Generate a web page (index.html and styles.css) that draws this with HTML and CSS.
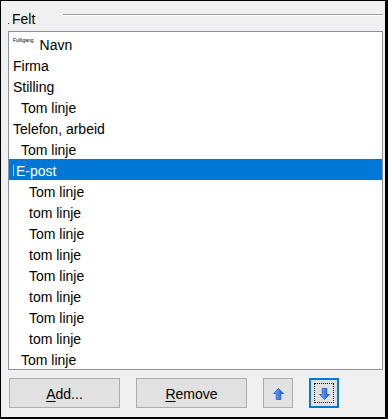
FILE: index.html
```html
<!DOCTYPE html>
<html lang="no">
<head>
    <meta charset="UTF-8">
    <title>Felt</title>
    <link rel="stylesheet" href="styles.css">
</head>
<body>
    <div class="window">
        <div class="group-head">
            <span class="dot"></span>
            <span class="caption">Felt</span>
            <span class="rule"></span>
        </div>

        <ul class="fields">
            <li class="lvl0"><span class="tag">Fulltgang</span>Navn</li>
            <li class="lvl0">Firma</li>
            <li class="lvl0">Stilling</li>
            <li class="lvl1">Tom linje</li>
            <li class="lvl0">Telefon, arbeid</li>
            <li class="lvl1">Tom linje</li>
            <li class="lvl0 selected"><span class="focus-mark"></span>E-post</li>
            <li class="lvl2">Tom linje</li>
            <li class="lvl2">tom linje</li>
            <li class="lvl2">Tom linje</li>
            <li class="lvl2">tom linje</li>
            <li class="lvl2">Tom linje</li>
            <li class="lvl2">tom linje</li>
            <li class="lvl2">Tom linje</li>
            <li class="lvl2">tom linje</li>
            <li class="lvl1">Tom linje</li>
        </ul>

        <div class="buttons">
            <button class="btn wide"><u>A</u>dd...</button>
            <button class="btn wide"><u>R</u>emove</button>
            <button class="btn square" title="Flytt opp">
                <svg width="11" height="12" viewBox="0 0 11 12">
                    <defs>
                        <linearGradient id="up-fill" x1="0" y1="0" x2="1" y2="0">
                            <stop offset="0" stop-color="#8fc0ff"/>
                            <stop offset="0.5" stop-color="#3f86ee"/>
                            <stop offset="1" stop-color="#1b4fc2"/>
                        </linearGradient>
                    </defs>
                    <path d="M5.5 0.5 L10.5 5.5 L7.8 5.5 L7.8 11.5 L3.2 11.5 L3.2 5.5 L0.5 5.5 Z" fill="url(#up-fill)" stroke="#2a56b8" stroke-width="0.8"/>
                </svg>
            </button>
            <button class="btn square focused" title="Flytt ned">
                <svg width="11" height="12" viewBox="0 0 11 12">
                    <defs>
                        <linearGradient id="down-fill" x1="0" y1="0" x2="1" y2="0">
                            <stop offset="0" stop-color="#8fc0ff"/>
                            <stop offset="0.5" stop-color="#3f86ee"/>
                            <stop offset="1" stop-color="#1b4fc2"/>
                        </linearGradient>
                    </defs>
                    <path d="M3.2 0.5 L7.8 0.5 L7.8 6.5 L10.5 6.5 L5.5 11.5 L0.5 6.5 L3.2 6.5 Z" fill="url(#down-fill)" stroke="#2a56b8" stroke-width="0.8"/>
                </svg>
            </button>
        </div>
    </div>
</body>
</html>
```

FILE: styles.css
```css
* {
    box-sizing: border-box;
    margin: 0;
    padding: 0;
}

body {
    background-color: #f0f0f0;
    font-family: "Liberation Sans", Arial, sans-serif;
    font-size: 14px;
    color: #000;
}

.window {
    background-color: #f0f0f0;
    border-style: solid;
    border-color: #000;
    border-width: 1px 3px 2px 1px;
    height: 419px;
    padding: 10px 2px 0 7px;
    width: 388px;
}

.group-head {
    align-items: flex-start;
    display: flex;
    height: 15px;
    line-height: 16px;
}

.dot {
    align-self: flex-end;
    background-color: #333;
    height: 1px;
    margin-bottom: 2px;
    width: 1px;
}

.caption {
    margin-left: 3px;
}

.rule {
    border-bottom: 1px solid #fff;
    border-top: 1px solid #a0a0a0;
    flex: 1;
    margin: 3px 0 0 28px;
}

.fields {
    background-color: #fff;
    border: 1px solid #8e8f9f;
    list-style: none;
    margin-top: 5px;
    padding: 1px 0 0 0;
    height: 339px;
    overflow: hidden;
}

.fields li {
    align-items: center;
    display: flex;
    height: 21px;
    line-height: 16px;
    padding-top: 2px;
    white-space: nowrap;
}

.fields .lvl0 {
    padding-left: 4px;
}

.fields .lvl1 {
    padding-left: 12px;
}

.fields .lvl2 {
    padding-left: 20px;
}

.fields .selected {
    background-color: #0078d7;
    color: #fff;
}

.tag {
    align-self: flex-start;
    font-size: 5px;
    line-height: 6px;
    margin: 2px 6px 0 0;
}

.focus-mark {
    background-color: #a9d0f2;
    height: 11px;
    margin-right: 2px;
    width: 1px;
}

.buttons {
    display: flex;
    gap: 16px;
    margin-top: 8px;
    padding-left: 1px;
}

.btn {
    align-items: center;
    background-color: #e1e1e1;
    border: 1px solid #adadad;
    color: #000;
    display: flex;
    font-family: "Liberation Sans", Arial, sans-serif;
    font-size: 14px;
    height: 30px;
    justify-content: center;
    padding-top: 1px;
}

.btn u {
    text-decoration-thickness: 1px;
    text-underline-offset: 2px;
}

.btn.wide {
    width: 111px;
}

.btn.square {
    width: 30px;
}

.btn.focused {
    border: 2px solid #0078d7;
    outline: 1px dotted #000;
    outline-offset: -6px;
}
```
